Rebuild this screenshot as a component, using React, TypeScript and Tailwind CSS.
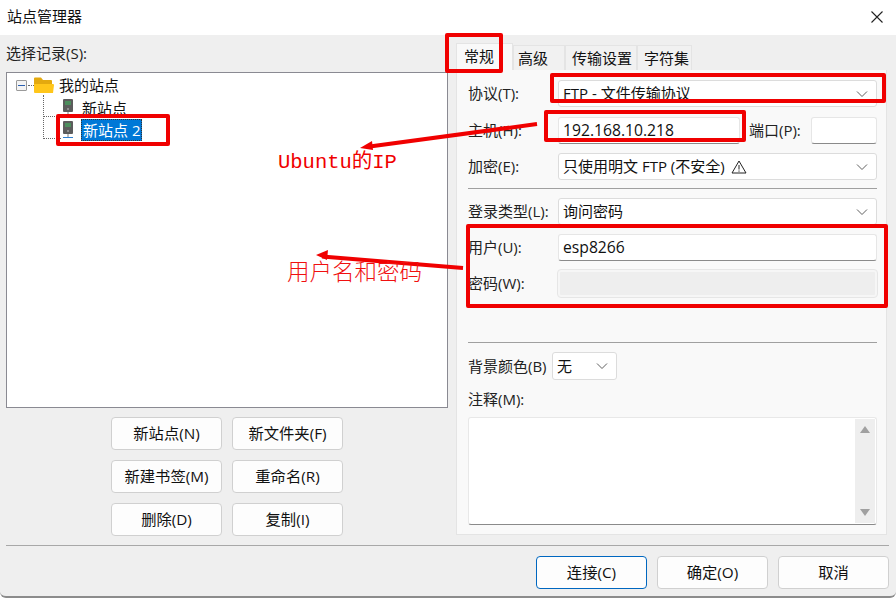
import { ReactNode } from "react";

const font = "font-['Open_Sans','Noto_Sans_CJK_SC',sans-serif]";

const Chevron = () => (
  <svg width="12" height="8" viewBox="0 0 12 8" fill="none" stroke="#606060" strokeWidth="1">
    <path d="M1 1.5l5 5 5-5" />
  </svg>
);

const Select = ({ children, className = "" }: { children: ReactNode; className?: string }) => (
  <div
    className={`flex h-[27px] items-center justify-between rounded-[3px] border border-[#dcdcdc] bg-white pl-[4px] pr-[8px] text-[15px] text-[#111] ${className}`}
  >
    <div className="flex items-center">{children}</div>
    <Chevron />
  </div>
);

const Input = ({ value, className = "" }: { value?: string; className?: string }) => (
  <div
    className={`flex h-[27px] items-center rounded-[3px] border border-[#e6e6e6] border-b-[#8a8a8a] bg-white pl-[4px] text-[15.7px] text-[#111] ${className}`}
  >
    {value}
  </div>
);

const Row = ({ label, className = "", children }: { label: string; className?: string; children: ReactNode }) => (
  <div className={`flex items-center ${className}`}>
    <div className="w-[90px] shrink-0 text-[15px] text-[#222]">{label}</div>
    <div className="min-w-0 flex-1">{children}</div>
  </div>
);

const Btn = ({ label, primary }: { label: string; primary?: boolean }) => (
  <div
    className={`flex h-[33px] w-[111px] items-center justify-center rounded-[4px] border bg-[#fdfdfd] text-[15.3px] text-[#111] ${
      primary ? "border-[#0067c0]" : "border-[#d0d0d0]"
    }`}
  >
    {label}
  </div>
);

const ServerIcon = ({ foot }: { foot?: boolean }) => (
  <svg width="12" height="18" viewBox="0 0 12 18" className="shrink-0">
    <rect x="1" y="0" width="10" height="13" rx="1" fill="#5c5c5c" />
    <path d="M3 3h6M3 5h6" stroke="#3fbf5f" strokeWidth="1" />
    <circle cx="6" cy="10" r="0.8" fill="#cfcfcf" />
    <path d="M6 13v3" stroke="#7a7a7a" strokeWidth="1" />
    <path d="M1 16.5h10" stroke={foot ? "#2f7fd0" : "#8a8a8a"} strokeWidth="1" />
  </svg>
);

const FolderIcon = () => (
  <svg width="20" height="17" viewBox="0 0 20 17" className="shrink-0">
    <path d="M0 1.5a1 1 0 011-1h6l2 2.5h8a1 1 0 011 1V8H0z" fill="#e3a90f" />
    <path d="M0 7h19a1 1 0 011 1l-1 8H1a1 1 0 01-1-1z" fill="#ffc61a" />
  </svg>
);

const Tab = ({ label, active, className = "" }: { label: string; active?: boolean; className?: string }) => (
  <div
    className={`flex items-center border border-b-0 border-[#e4e4e4] text-[15px] text-[#111] ${
      active ? "h-[27px] bg-[#f9f9f9] pb-[2px]" : "h-[25px] bg-[#f1f1f1]"
    } ${className}`}
  >
    {label}
  </div>
);

export default function App() {
  return (
    <div className={`relative flex h-[599px] w-[896px] flex-col overflow-hidden bg-white ${font}`}>
      <div className="flex h-[35px] shrink-0 items-center justify-between pb-[2px] pl-[7px] pr-[12px] text-[15px] text-[#111]">
        <span>站点管理器</span>
        <svg width="14" height="14" viewBox="0 0 14 14" stroke="#222" strokeWidth="1.1">
          <path d="M1.5 1.5l11 11M12.5 1.5l-11 11" />
        </svg>
      </div>

      <div className="flex h-[563px] shrink-0 flex-col rounded-b-[6px] border-b-2 border-[#8c8c8c] bg-[#efefef] pl-[6px] pr-[7px]">
        <div className="flex h-[500px] shrink-0">
          <div className="flex w-[442px] shrink-0 flex-col">
            <div className="flex h-[37px] shrink-0 items-center text-[15px] text-[#222]">选择记录(S):</div>
            <div className="h-[336px] shrink-0 border border-[#8a8a92] bg-white pl-[9px] pt-[2px] text-[15px] text-[#111]">
              <div className="flex h-[20px] items-center">
                <div className="flex h-[11px] w-[11px] items-center justify-center rounded-[1px] border border-[#9a9a9a] bg-[#f4f4f4]">
                  <div className="h-[1px] w-[7px] bg-[#2a5fb0]" />
                </div>
                <div className="ml-[1px] w-[6px] border-t border-dotted border-[#666]" />
                <FolderIcon />
                <span className="ml-[5px]">我的站点</span>
              </div>
              <div className="relative mt-[2px] pl-[46px]">
                <div className="absolute left-[27px] top-[-2px] h-[44px] w-[18px] border-b border-l border-dotted border-[#666]" />
                <div className="absolute left-[27px] top-[19px] w-[18px] border-t border-dotted border-[#666]" />
                <div className="flex h-[22px] items-center">
                  <ServerIcon />
                  <span className="ml-[8px]">新站点</span>
                </div>
                <div className="flex h-[22px] items-center">
                  <ServerIcon foot />
                  <span className="ml-[7px] border border-dotted border-[#333] bg-[#0078d7] px-[1px] leading-[20px] text-white">
                    新站点 2
                  </span>
                </div>
              </div>
            </div>
            <div className="mt-[9px] grid grid-cols-[111px_111px] justify-center gap-x-[10px] gap-y-[10px]">
              <Btn label="新站点(N)" />
              <Btn label="新文件夹(F)" />
              <Btn label="新建书签(M)" />
              <Btn label="重命名(R)" />
              <Btn label="删除(D)" />
              <Btn label="复制(I)" />
            </div>
          </div>

          <div className="ml-[8px] flex w-[431px] shrink-0 flex-col pt-[8px]">
            <div className="flex h-[27px] shrink-0 items-end">
              <Tab label="常规" active className="w-[57px] pl-[7px]" />
              <Tab label="高级" className="w-[52px] pl-[4px]" />
              <Tab label="传输设置" className="w-[72px] pl-[6px]" />
              <Tab label="字符集" className="w-[55px] pl-[6px]" />
            </div>
            <div className="flex h-[465px] shrink-0 flex-col border border-t-0 border-[#e4e4e4] bg-[#f9f9f9] pl-[11px] pr-[9px]">
              <Row label="协议(T):" className="mt-[10px]">
                <Select>FTP - 文件传输协议</Select>
              </Row>
              <Row label="主机(H):" className="mt-[10px]">
                <div className="flex items-center">
                  <Input value="192.168.10.218" className="w-[182px]" />
                  <span className="ml-[9px] w-[62px] text-[15px] text-[#222]">端口(P):</span>
                  <Input className="flex-1" />
                </div>
              </Row>
              <Row label="加密(E):" className="mt-[9px]">
                <Select>
                  只使用明文 FTP (不安全)
                  <svg width="16" height="14" viewBox="0 0 16 14" fill="none" stroke="#222" strokeWidth="1" className="ml-[6px]">
                    <path d="M8 1L1 13h14z" />
                    <path d="M8 5v4.5M8 10.5v1.2" />
                  </svg>
                </Select>
              </Row>
              <div className="mt-[8px] h-[1px] bg-[#a0a0a0]" />
              <Row label="登录类型(L):" className="mt-[9px]">
                <Select>询问密码</Select>
              </Row>
              <Row label="用户(U):" className="mt-[9px]">
                <Input value="esp8266" />
              </Row>
              <Row label="密码(W):" className="mt-[9px]">
                <div className="h-[27px] rounded-[3px] border-2 border-[#f6f6f6] bg-[#eeeeee] outline outline-[#e6e6e6]" />
              </Row>
              <div className="mt-[45px] h-[1px] bg-[#a0a0a0]" />
              <div className="mt-[9px] flex items-center">
                <span className="w-[84px] text-[15px] text-[#222]">背景颜色(B)</span>
                <Select className="h-[28px] w-[65px]">无</Select>
              </div>
              <div className="mt-[9px] h-[20px] text-[15px] leading-[20px] text-[#222]">注释(M):</div>
              <div className="mt-[8px] flex h-[108px] justify-end rounded-[3px] border border-[#e8e8e8] border-b-[#8a8a8a] bg-white p-[1px]">
                <div className="flex w-[20px] flex-col items-center justify-between bg-[#eeeeee] py-[7px]">
                  <svg width="10" height="7" viewBox="0 0 10 7" fill="#a0a0a0">
                    <path d="M5 0l5 7H0z" />
                  </svg>
                  <svg width="10" height="7" viewBox="0 0 10 7" fill="#a0a0a0">
                    <path d="M0 0h10L5 7z" />
                  </svg>
                </div>
              </div>
            </div>
          </div>
        </div>

        <div className="mt-[10px] h-[1px] w-[883px] shrink-0 bg-[#a8a8a8]" />
        <div className="mt-[10px] flex justify-end gap-x-[10px]">
          <Btn label="连接(C)" primary />
          <Btn label="确定(O)" />
          <Btn label="取消" />
        </div>
      </div>

      {/* red annotations drawn over the dialog */}
      <div className="absolute left-[445px] top-[33px] h-[40px] w-[58px] rounded-[2px] border-4 border-[#f00000]" />
      <div className="absolute left-[550px] top-[73px] h-[30px] w-[336px] rounded-[2px] border-4 border-[#f00000]" />
      <div className="absolute left-[544px] top-[110px] h-[32px] w-[202px] rounded-[2px] border-4 border-[#f00000]" />
      <div className="absolute left-[56px] top-[114px] h-[32px] w-[114px] rounded-[2px] border-4 border-[#f00000]" />
      <div className="absolute left-[466px] top-[224px] h-[84px] w-[422px] rounded-[2px] border-4 border-[#f00000]" />

      <svg width="896" height="599" className="pointer-events-none absolute left-0 top-0">
        <path d="M366 147L537 124" stroke="#f00000" strokeWidth="4" fill="none" />
        <path d="M360 148l12-7 1 9z" fill="#f00000" />
        <path d="M322 256.5L463 268" stroke="#f00000" strokeWidth="4" fill="none" />
        <path d="M316 255l12-5-1 10z" fill="#f00000" />
      </svg>
      <div className="absolute left-[278px] top-[150px] font-['Liberation_Mono','Noto_Sans_CJK_SC',monospace] text-[20.5px] leading-[26px] text-[#f00000]">
        Ubuntu的IP
      </div>
      <div className="absolute left-[287px] top-[256px] font-['Noto_Sans_CJK_SC',sans-serif] text-[22.5px] font-light leading-[28px] text-[#f01010]">
        用户名和密码
      </div>
    </div>
  );
}
